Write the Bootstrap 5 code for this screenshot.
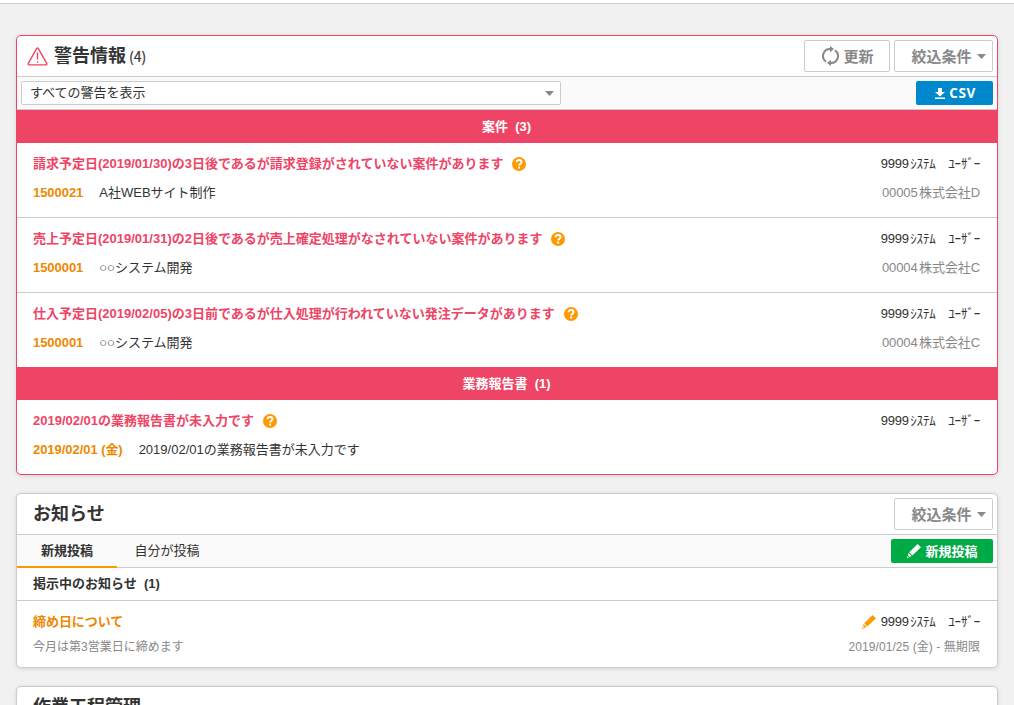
<!DOCTYPE html>
<html lang="ja">
<head>
<meta charset="utf-8">
<meta name="viewport" content="width=device-width, initial-scale=1">
<title>警告情報</title>
<link rel="stylesheet" href="https://cdn.jsdelivr.net/npm/bootstrap@5.3.0/dist/css/bootstrap.min.css">
<style>
  html { overflow: hidden; }
  body { background: #f1f1f1; color: #333; font: 13px/20px "Liberation Sans", "Noto Sans CJK JP", sans-serif; height: 705px; overflow: hidden; }
  .topline { height: 4px; background: #fff; border-bottom: 1px solid #ccc; }
  .page-body { padding: 31px 16px 0; }
  .panel { background: #fff; border: 1px solid #ccc; border-radius: 5px; box-shadow: 0 1px 4px rgba(0,0,0,.12); margin-bottom: 18px; overflow: hidden; }
  .panel-alert { border-color: #e46; }
  .panel-head { height: 41px; padding: 0 4px 0 16px; border-bottom: 1px solid #ccc; }
  .panel-alert .panel-head { padding-left: 10px; }
  .panel-head h2 { font-size: 18px; line-height: 24px; font-weight: 700; margin: 0; }
  .panel-alert h2 { margin-left: 6px; }
  .head-count { font: 14px/24px "Noto Sans CJK JP", sans-serif; margin-left: 3px; -webkit-text-stroke: .2px #333; }
  .bar { height: 33px; background: #fafafa; border-bottom: 1px solid #ccc; padding: 0 4px; }
  .btn-tool { --bs-btn-padding-y: 0; --bs-btn-padding-x: 0; --bs-btn-font-size: 15px; --bs-btn-line-height: 30px; --bs-btn-color: #888; --bs-btn-border-color: #ccc; --bs-btn-bg: #fff; --bs-btn-border-radius: 2px; --bs-btn-font-weight: 700; height: 32px; font-family: "Noto Sans CJK JP", sans-serif; }
  .btn-reload { width: 86px; padding-left: 2px; }
  .btn-filter { width: 99px; padding-left: 10px; }
  .btn-filter svg { margin-left: 5px; }
  .btn-act { --bs-btn-padding-y: 0; --bs-btn-padding-x: 0; --bs-btn-font-size: 13px; --bs-btn-line-height: 24px; --bs-btn-color: #fff; --bs-btn-border-width: 0; --bs-btn-border-radius: 2px; --bs-btn-font-weight: 700; height: 24px; font-family: "Noto Sans CJK JP", sans-serif; }
  .btn-csv { --bs-btn-bg: #08c; --bs-btn-font-size: 13.5px; width: 77px; padding-left: 2px; font-family: "Open Sans", sans-serif; letter-spacing: .5px; }
  .btn-post { --bs-btn-bg: #0a4; width: 102px; padding-left: 1px; }
  .picker { width: 540px; height: 24px; background: #fff; border: 1px solid #ccc; border-radius: 2px; padding: 0 6px 0 8px; line-height: 22px; }
  .band { height: 33px; background: #e46; color: #fff; font-weight: 700; line-height: 33px; text-align: center; white-space: pre; padding-right: 1px; }
  .entry { height: 75px; padding: 11px 17px 0 16px; border-bottom: 1px solid #ccc; white-space: nowrap; }
  .entry-last { height: 74px; border-bottom: 0; }
  .entry-news { height: 66px; border-bottom: 0; }
  .entry-sub { margin-top: 9px; }
  .entry-news .entry-sub { margin-top: 5px; font-size: 12px; color: #888; }
  .entry-title { color: #e46; font-weight: 700; }
  .help-mark { margin: 0 0 0 9px; }
  .code { color: #e80; font-weight: 700; margin-right: 16px; letter-spacing: -.05px; }
  .user { white-space: pre; letter-spacing: -.2px; word-spacing: -2px; }
  .client { color: #888; white-space: pre; letter-spacing: -.1px; word-spacing: -2px; }
  .period { letter-spacing: .07px; }
  .edit-mark { color: #f90; margin-right: 5px; }
  .tab { height: 33px; line-height: 31px; color: #333; text-align: center; width: 100px; margin-bottom: -1px; }
  .tab-on { font-weight: 700; border-bottom: 2px solid #f90; }
  .sub-head { height: 33px; line-height: 31px; border-bottom: 1px solid #ccc; padding-left: 16px; font-weight: 700; white-space: pre; }
  svg { display: block; flex: none; }
</style>
</head>
<body>
<svg class="d-none">
  <symbol id="help" viewBox="0 0 14 14"><circle cx="7" cy="7" r="7" fill="#f90"/><path d="M4.500 5.300C4.600 3.800 5.600 3 7.100 3 8.600 3 9.600 3.900 9.600 5.100 9.600 6.900 7.100 6.800 7.100 8.600" fill="none" stroke="#fff" stroke-width="1.900"/><rect x="6.100" y="9.500" width="2" height="2" fill="#fff"/></symbol>
  <symbol id="caret" viewBox="0 0 9 5"><path d="M0 0h9L4.500 5z" fill="#888"/></symbol>
  <symbol id="pencil" viewBox="0 0 14 14"><path d="M10.600 0 14 3.300 5.300 11.600 2.200 8.300zM1.600 9 4.600 12 2.800 13 1 11.300zM.600 12 2 13.400 0 14z" fill="currentColor"/></symbol>
</svg>
<div class="topline"></div>
<main class="page-body">
  <section class="panel panel-alert">
    <header class="panel-head d-flex align-items-center">
      <svg width="21" height="19" viewBox="0 0 21 19" fill="none" stroke="#e46" stroke-width="1.400"><path d="M9.600 1.600Q10.500.300 11.400 1.600L19.700 16.300Q20.300 17.800 18.800 17.900H2.200Q.700 17.800 1.300 16.300z"/><path d="M10.500 5.500v7M10.500 14.200v1.500"/></svg>
      <h2>警告情報</h2><span class="head-count">(4)</span>
      <div class="d-flex gap-1 ms-auto">
        <button class="btn btn-tool btn-reload d-flex align-items-center justify-content-center"><svg class="me-1" width="17" height="20" viewBox="0 0 17 20" fill="none" stroke="#888" stroke-width="2"><path d="M4 15.700A7 7 0 0 1 8.500 3M13 4.300A7 7 0 0 1 8.500 17"/><path d="M8 0l4 3-4 3.200zM9 20l-4-3 4-3.200z" fill="#888" stroke="none"/></svg>更新</button>
        <button class="btn btn-tool btn-filter d-flex align-items-center justify-content-center">絞込条件<svg width="9" height="5"><use href="#caret"/></svg></button>
      </div>
    </header>
    <div class="bar d-flex align-items-center">
      <div class="picker d-flex align-items-center">すべての警告を表示<svg class="ms-auto" width="9" height="5"><use href="#caret"/></svg></div>
      <button class="btn btn-act btn-csv ms-auto d-flex align-items-center justify-content-center"><svg class="me-1" width="10" height="11" viewBox="0 0 10 11" fill="#fff"><path d="M3 0h4v4h3L5 8.500 0 4h3zM0 9.500h10V11H0z"/></svg>CSV</button>
    </div>
    <div class="band">案件  (3)</div>
    <div class="entry">
      <div class="d-flex align-items-center"><span class="entry-title">請求予定日(2019/01/30)の3日後であるが請求登録がされていない案件があります</span><svg class="help-mark" width="14" height="14"><use href="#help"/></svg><span class="user ms-auto">9999 ｼｽﾃﾑ　ﾕｰｻﾞｰ</span></div>
      <div class="d-flex entry-sub"><span class="code">1500021</span><span>A社WEBサイト制作</span><span class="client ms-auto">00005 株式会社D</span></div>
    </div>
    <div class="entry">
      <div class="d-flex align-items-center"><span class="entry-title">売上予定日(2019/01/31)の2日後であるが売上確定処理がなされていない案件があります</span><svg class="help-mark" width="14" height="14"><use href="#help"/></svg><span class="user ms-auto">9999 ｼｽﾃﾑ　ﾕｰｻﾞｰ</span></div>
      <div class="d-flex entry-sub"><span class="code">1500001</span><span>○○システム開発</span><span class="client ms-auto">00004 株式会社C</span></div>
    </div>
    <div class="entry entry-last">
      <div class="d-flex align-items-center"><span class="entry-title">仕入予定日(2019/02/05)の3日前であるが仕入処理が行われていない発注データがあります</span><svg class="help-mark" width="14" height="14"><use href="#help"/></svg><span class="user ms-auto">9999 ｼｽﾃﾑ　ﾕｰｻﾞｰ</span></div>
      <div class="d-flex entry-sub"><span class="code">1500001</span><span>○○システム開発</span><span class="client ms-auto">00004 株式会社C</span></div>
    </div>
    <div class="band">業務報告書  (1)</div>
    <div class="entry entry-last">
      <div class="d-flex align-items-center"><span class="entry-title">2019/02/01の業務報告書が未入力です</span><svg class="help-mark" width="14" height="14"><use href="#help"/></svg><span class="user ms-auto">9999 ｼｽﾃﾑ　ﾕｰｻﾞｰ</span></div>
      <div class="d-flex entry-sub"><span class="code">2019/02/01 (金)</span><span>2019/02/01の業務報告書が未入力です</span></div>
    </div>
  </section>
  <section class="panel">
    <header class="panel-head d-flex align-items-center">
      <h2>お知らせ</h2>
      <button class="btn btn-tool btn-filter ms-auto d-flex align-items-center justify-content-center">絞込条件<svg width="9" height="5"><use href="#caret"/></svg></button>
    </header>
    <div class="bar d-flex align-items-center ps-0">
      <div class="tab tab-on">新規投稿</div><div class="tab">自分が投稿</div>
      <button class="btn btn-act btn-post ms-auto d-flex align-items-center justify-content-center"><svg class="me-1" width="14" height="14"><use href="#pencil"/></svg>新規投稿</button>
    </div>
    <div class="sub-head">掲示中のお知らせ  (1)</div>
    <div class="entry entry-news">
      <div class="d-flex align-items-center"><span class="code">締め日について</span><svg class="edit-mark ms-auto" width="14" height="14"><use href="#pencil"/></svg><span class="user">9999 ｼｽﾃﾑ　ﾕｰｻﾞｰ</span></div>
      <div class="d-flex entry-sub"><span>今月は第3営業日に締めます</span><span class="period ms-auto">2019/01/25 (金) - 無期限</span></div>
    </div>
  </section>
  <section class="panel">
    <header class="panel-head d-flex align-items-center"><h2>作業工程管理</h2></header>
  </section>
</main>
<script src="https://cdn.jsdelivr.net/npm/bootstrap@5.3.0/dist/js/bootstrap.bundle.min.js"></script>
</body>
</html>
